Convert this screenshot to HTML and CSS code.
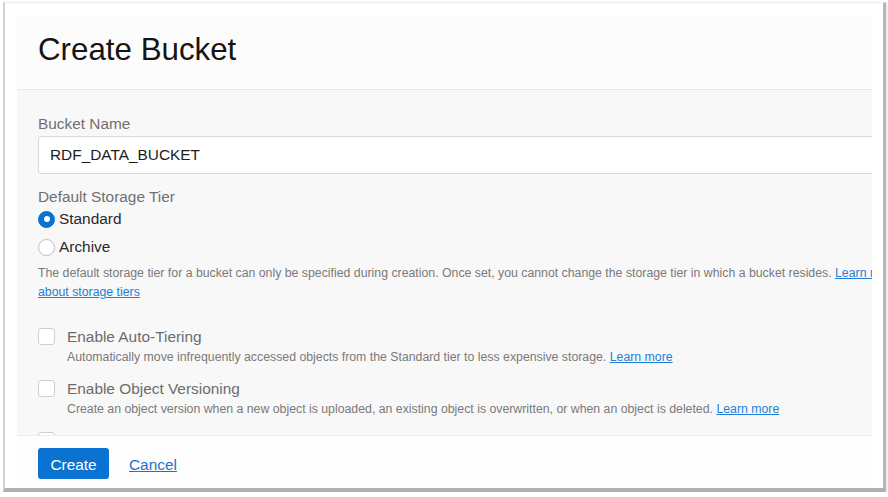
FILE: index.html
```html
<!DOCTYPE html>
<html lang="en">
<head>
<meta charset="utf-8">
<title>Create Bucket</title>
<link rel="stylesheet" href="styles.css">
</head>
<body>
<div class="frame">
  <div class="panel">
    <header class="panel-header">
      <h1 class="title">Create Bucket</h1>
    </header>
    <main class="panel-body">
      <div class="content">
        <label class="field-label" for="bucket-name">Bucket Name</label>
        <div class="input">RDF_DATA_BUCKET</div>

        <div class="field-label tier-label">Default Storage Tier</div>
        <div class="radio-group">
          <div class="radio-row">
            <span class="radio checked"></span>
            <span class="radio-text">Standard</span>
          </div>
          <div class="radio-row">
            <span class="radio"></span>
            <span class="radio-text">Archive</span>
          </div>
        </div>
        <p class="help">The default storage tier for a bucket can only be specified during creation. Once set, you cannot change the storage tier in which a bucket resides. <a class="link" href="#">Learn more about storage tiers</a></p>

        <div class="check-list">
          <div class="check-item">
            <span class="checkbox"></span>
            <div class="check-text">
              <div class="check-label">Enable Auto-Tiering</div>
              <div class="check-desc">Automatically move infrequently accessed objects from the Standard tier to less expensive storage. <a class="link" href="#">Learn more</a></div>
            </div>
          </div>
          <div class="check-item">
            <span class="checkbox"></span>
            <div class="check-text">
              <div class="check-label">Enable Object Versioning</div>
              <div class="check-desc">Create an object version when a new object is uploaded, an existing object is overwritten, or when an object is deleted. <a class="link" href="#">Learn more</a></div>
            </div>
          </div>
          <div class="check-item">
            <span class="checkbox"></span>
            <div class="check-text">
              <div class="check-label">Emit Object Events</div>
              <div class="check-desc">Create automation based on object state changes using the Events Service.</div>
            </div>
          </div>
        </div>
      </div>
    </main>
    <footer class="panel-footer">
      <button class="btn-primary" type="button">Create</button>
      <a class="cancel" href="#">Cancel</a>
    </footer>
  </div>
</div>
</body>
</html>
```

FILE: styles.css
```css
html, body {
  margin: 0;
  padding: 0;
  background: #ffffff;
}

body {
  font-family: "Liberation Sans", Arial, sans-serif;
}

.frame {
  box-sizing: border-box;
  width: 883px;
  height: 490px;
  margin: 2px 0 0 3px;
  padding: 13px 11px 0 12px;
  background: #ffffff;
  border-top: 1px solid #ededed;
  border-left: 2px solid #d2d2d2;
  border-right: 3px solid #b7b7b7;
  border-bottom: 4px solid #b0b0b0;
  box-shadow: 1px 1px 2px rgba(0, 0, 0, 0.15);
}

.panel {
  width: 855px;
  height: 472px;
  display: flex;
  flex-direction: column;
  overflow: hidden;
}

.panel-header {
  box-sizing: border-box;
  height: 74px;
  padding: 16px 21px 0;
  background: #fcfcfc;
  border-bottom: 1px solid #e6e6e6;
}

.title {
  margin: 0;
  font-size: 31.3px;
  line-height: 36px;
  font-weight: normal;
  color: #161513;
}

.panel-body {
  height: 345px;
  overflow: hidden;
  background: #f8f8f8;
}

.content {
  width: 870px;
  padding: 25px 0 0 21px;
}

.field-label {
  display: block;
  font-size: 15.4px;
  line-height: 18px;
  color: #707070;
}

.input {
  box-sizing: border-box;
  height: 38px;
  margin-top: 3px;
  padding: 0 11px;
  background: #ffffff;
  border: 1px solid #d9d9d9;
  border-radius: 3px;
  font-size: 15.4px;
  line-height: 36px;
  color: #1c1c1c;
}

.tier-label {
  margin-top: 14px;
}

.radio-group {
  display: flex;
  flex-direction: column;
  gap: 10px;
  margin-top: 4px;
}

.radio-row {
  display: flex;
  align-items: center;
  gap: 4px;
  height: 18px;
}

.radio {
  box-sizing: border-box;
  width: 17px;
  height: 17px;
  border-radius: 50%;
  border: 1px solid #bdbdbd;
  background: #ffffff;
  display: flex;
  align-items: center;
  justify-content: center;
}

.radio.checked {
  background: #0b72d0;
  border-color: #0b72d0;
}

.radio.checked::after {
  content: "";
  width: 6px;
  height: 6px;
  border-radius: 50%;
  background: #ffffff;
}

.radio-text {
  font-size: 15.4px;
  line-height: 18px;
  color: #2a2a2a;
}

.help {
  margin: 8px 0 0;
  font-size: 12.3px;
  line-height: 19px;
  color: #7a7a7a;
}

.link {
  color: #1f7fd8;
  text-decoration: underline;
}

.check-list {
  display: flex;
  flex-direction: column;
  gap: 12px;
  margin-top: 25px;
}

.check-item {
  display: flex;
  align-items: flex-start;
  gap: 12px;
}

.checkbox {
  box-sizing: border-box;
  flex: none;
  width: 17px;
  height: 17px;
  margin-top: 1px;
  background: #ffffff;
  border: 1px solid #cfcfcf;
  border-radius: 3px;
}

.check-label {
  font-size: 15.4px;
  line-height: 20px;
  color: #6c6c6c;
}

.check-desc {
  margin-top: 1px;
  font-size: 12.3px;
  line-height: 19px;
  color: #7a7a7a;
}

.panel-footer {
  box-sizing: border-box;
  height: 53px;
  padding: 12px 21px 0;
  background: #fefefe;
  border-top: 1px solid #ececec;
  display: flex;
  align-items: flex-start;
  gap: 20px;
}

.btn-primary {
  height: 31px;
  width: 71px;
  padding: 0;
  border: none;
  border-radius: 3px;
  background: #0a72d0;
  color: #ffffff;
  font-family: "Liberation Sans", Arial, sans-serif;
  font-size: 15.4px;
  line-height: 33px;
}

.cancel {
  font-size: 15.4px;
  line-height: 33px;
  color: #1a72cf;
  text-decoration: underline;
}
```
